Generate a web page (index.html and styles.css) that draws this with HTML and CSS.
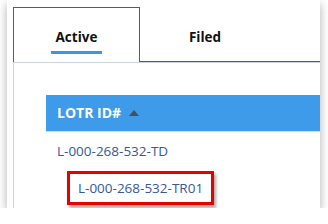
FILE: index.html
```html
<!DOCTYPE html>
<html lang="en">
<head>
    <meta charset="UTF-8">
    <title>LOTR list</title>
    <link rel="stylesheet" href="styles.css">
</head>
<body>
    <div class="panel">
        <div class="tab-bar">
            <div class="tab active"><span>Active</span></div>
            <div class="tab"><span>Filed</span></div>
            <div class="tab-rest"></div>
        </div>
        <div class="content">
            <div class="grid-head">
                LOTR ID#
                <span class="sort-up"></span>
            </div>
            <div class="row">L-000-268-532-TD</div>
            <div class="row child">
                <span class="marked">L-000-268-532-TR01</span>
            </div>
        </div>
    </div>
</body>
</html>
```

FILE: styles.css
```css
* {
    box-sizing: border-box;
    font-family: 'Open Sans', 'Segoe UI', sans-serif;
}

body {
    margin: 0;
    background: #ffffff;
}

.panel {
    width: 313px;
    height: 208px;
    margin-left: 7px;
    background: #ffffff;
    box-shadow: 0 4px 9px rgba(0, 0, 0, 0.32);
    padding: 7px 0 0 6px;
    overflow: hidden;
}

.tab-bar {
    display: flex;
    height: 55px;
}

.tab {
    width: 130px;
    border-bottom: 1px solid #5c5c5c;
    display: flex;
    justify-content: center;
    padding-top: 21px;
    font-size: 13.5px;
    font-weight: 700;
    color: #111;
}

.tab span {
    height: 18px;
}

.tab.active {
    width: 127px;
    border: 1px solid #5c5c5c;
    border-bottom: none;
    padding-top: 17px;
}

.tab.active span {
    height: 29px;
    padding: 3px 5px 0;
    border-bottom: 3px solid #3d96e0;
}

.tab-rest {
    flex: 1;
    border-bottom: 1px solid #5c5c5c;
}

.content {
    border-top: 1px solid #c9d4de;
    border-left: 1px solid #c9d4de;
    height: 160px;
    padding: 32px 0 0 32px;
}

.grid-head {
    height: 37px;
    background: #3d9be9;
    border-bottom: 1px solid #d6dde4;
    color: #ffffff;
    font-size: 14px;
    font-weight: 700;
    display: flex;
    align-items: center;
    padding-left: 11px;
    padding-bottom: 1px;
}

.sort-up {
    width: 0;
    height: 0;
    margin-left: 8px;
    border-left: 5px solid transparent;
    border-right: 5px solid transparent;
    border-bottom: 6px solid #46505a;
}

.row {
    height: 38px;
    display: flex;
    align-items: center;
    padding-left: 11px;
    font-size: 13.5px;
    color: #35589a;
}

.row.child {
    padding-left: 21px;
    height: 36px;
}

.marked {
    border: 3px solid #e60000;
    padding: 4px 8px;
    line-height: 20px;
    box-shadow: 2px 3px 3px rgba(0, 0, 0, 0.35);
}
```
